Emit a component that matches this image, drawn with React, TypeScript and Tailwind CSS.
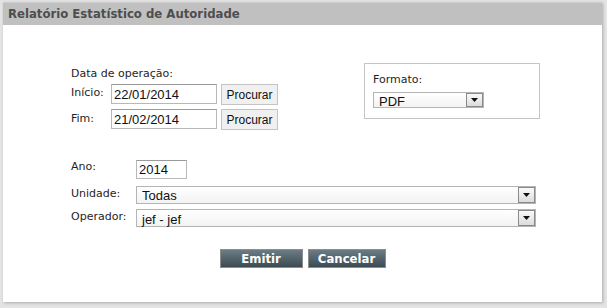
import React from 'react';

const labelFont = { fontFamily: '"DejaVu Sans", Verdana, sans-serif' };
const titleFont = { fontFamily: '"DejaVu Sans Condensed", "DejaVu Sans", Tahoma, sans-serif' };
const fieldFont = { fontFamily: '"Liberation Sans", Arial, sans-serif' };

function Arrow() {
  return (
    <span className="flex h-full w-[17px] shrink-0 items-center justify-center border border-[#8a8a8a] bg-gradient-to-b from-[#fafafa] to-[#dcdcdc]">
      <svg width="7" height="4" viewBox="0 0 7 4">
        <polygon points="0,0 7,0 3.5,4" fill="#111" />
      </svg>
    </span>
  );
}

function Select({ value, width, height }: { value: string; width: string; height: string }) {
  return (
    <div
      className={`flex items-center border border-[#b4b4b4] bg-gradient-to-b from-[#ffffff] to-[#f3f3f3] ${width} ${height}`}
    >
      <span className="flex-1 pl-[5px] pt-[2px] text-[13px] leading-none text-[#111]" style={fieldFont}>
        {value}
      </span>
      <Arrow />
    </div>
  );
}

function TextBox({ value, width, height }: { value: string; width: string; height: string }) {
  return (
    <div
      className={`flex items-center border border-[#b8b8b8] border-t-[#9a9a9a] bg-white pl-[2px] text-[13px] leading-none text-[#111] ${width} ${height}`}
      style={fieldFont}
    >
      {value}
    </div>
  );
}

function Procurar() {
  return (
    <button
      className="ml-[4px] flex h-[21px] w-[57px] items-center justify-center border border-[#c4c4c4] bg-[#f0f0f0] text-[12px] text-[#111]"
      style={fieldFont}
    >
      Procurar
    </button>
  );
}

export default function App() {
  return (
    <div className="h-[308px] w-[607px] bg-[#e4e4e4] pl-[3px] pt-[2px]">
      <div className="h-[300px] w-[599px] bg-white shadow-[1px_1px_3px_rgba(0,0,0,0.25)]">
        {/* Header */}
        <div className="flex h-[23px] items-center border-t border-[#cfcfcf] bg-[#c0c0c0] pl-[5px]">
          <h1 className="text-[13px] font-bold text-[#4e4e4e]" style={titleFont}>
            Relatório Estatístico de Autoridade
          </h1>
        </div>

        <div className="pl-[68px] pt-[38px] text-[11px] text-[#1e1e1e]" style={labelFont}>
          <div className="flex items-start">
            {/* Data de operação */}
            <div className="w-[293px] pt-[4px]">
              <div className="h-[17px] leading-[14px]">Data de operação:</div>
              <div className="flex items-start">
                <span className="w-[40px] pt-[1px]">Início:</span>
                <TextBox value="22/01/2014" width="w-[106px]" height="h-[20px]" />
                <Procurar />
              </div>
              <div className="mt-[4px] flex items-start">
                <span className="w-[40px] pt-[2px]">Fim:</span>
                <TextBox value="21/02/2014" width="w-[106px]" height="h-[20px]" />
                <Procurar />
              </div>
            </div>

            {/* Formato */}
            <div className="h-[56px] w-[176px] border border-[#c4c4c4] pl-[8px] pt-[9px]">
              <div className="h-[19px] leading-[14px]">Formato:</div>
              <Select value="PDF" width="w-[111px]" height="h-[16px]" />
            </div>
          </div>

          <div className="mt-[29px] flex items-center">
            <span className="w-[65px] pb-[4px]">Ano:</span>
            <TextBox value="2014" width="w-[51px]" height="h-[19px]" />
          </div>
          <div className="mt-[6px] flex items-center">
            <span className="w-[65px] pb-[2px]">Unidade:</span>
            <Select value="Todas" width="w-[400px]" height="h-[18px]" />
          </div>
          <div className="mt-[5px] flex items-center">
            <span className="w-[65px] pb-[2px]">Operador:</span>
            <Select value="jef - jef" width="w-[400px]" height="h-[18px]" />
          </div>
        </div>

        <div className="mt-[21px] flex justify-center gap-[5px]" style={titleFont}>
          <button className="h-[19px] w-[83px] border border-[#8d8d8d] bg-gradient-to-b from-[#6b7c84] to-[#3d4c54] text-[13px] font-bold leading-none text-white">
            Emitir
          </button>
          <button className="h-[19px] w-[78px] border border-[#8d8d8d] bg-gradient-to-b from-[#6b7c84] to-[#3d4c54] text-[13px] font-bold leading-none text-white">
            Cancelar
          </button>
        </div>
      </div>
    </div>
  );
}
